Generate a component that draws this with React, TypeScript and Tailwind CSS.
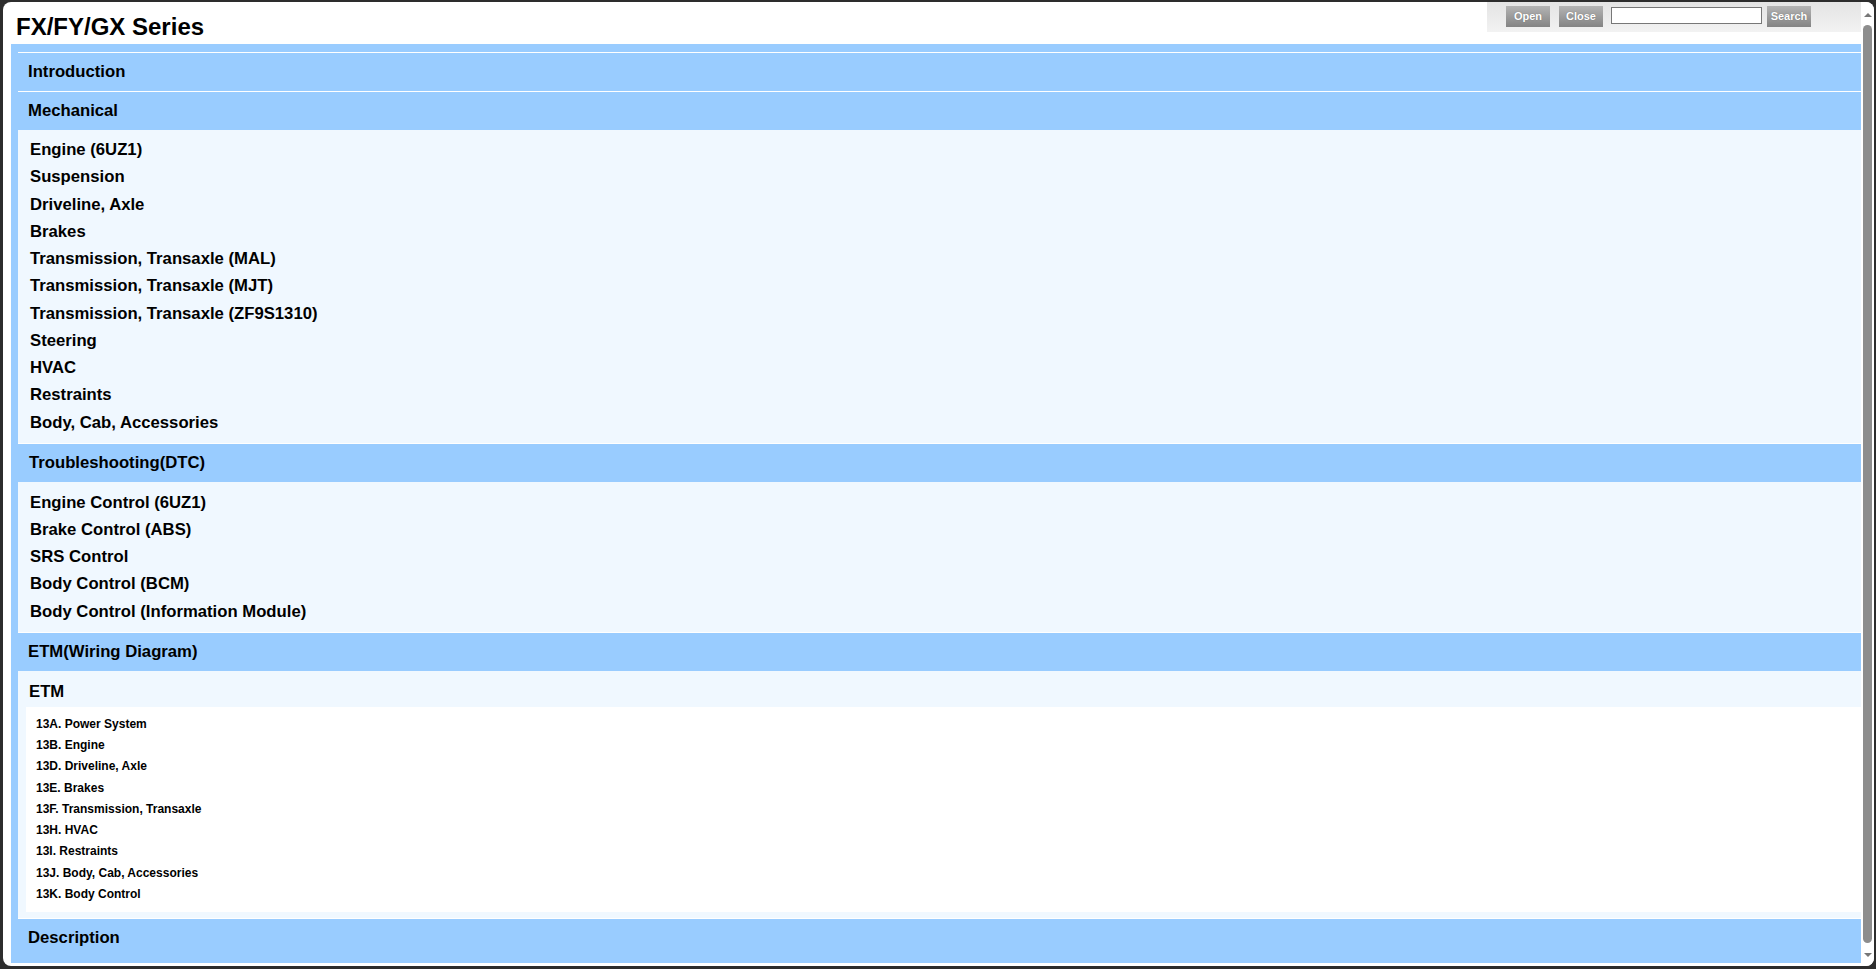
import React from "react";

// --- Table of contents data ----------------------------------------------------
const mechanical = [
  "Engine (6UZ1)",
  "Suspension",
  "Driveline, Axle",
  "Brakes",
  "Transmission, Transaxle (MAL)",
  "Transmission, Transaxle (MJT)",
  "Transmission, Transaxle (ZF9S1310)",
  "Steering",
  "HVAC",
  "Restraints",
  "Body, Cab, Accessories",
];

const troubleshooting = [
  "Engine Control (6UZ1)",
  "Brake Control (ABS)",
  "SRS Control",
  "Body Control (BCM)",
  "Body Control (Information Module)",
];

const etmChapters = [
  "13A. Power System",
  "13B. Engine",
  "13D. Driveline, Axle",
  "13E. Brakes",
  "13F. Transmission, Transaxle",
  "13H. HVAC",
  "13I. Restraints",
  "13J. Body, Cab, Accessories",
  "13K. Body Control",
];

function SectionHeader({ label, inset = "pl-[10px]" }: { label: string; inset?: string }) {
  return (
    <div
      className={`h-[39px] border-t border-white bg-[#99ccff] ${inset} text-[16.7px] font-bold leading-[38px] text-black`}
    >
      {label}
    </div>
  );
}

function ToolButton({ label, className = "" }: { label: string; className?: string }) {
  return (
    <button
      className={`h-[21px] w-[44px] shrink-0 bg-gradient-to-b from-[#b4b4b4] to-[#848484] text-[11px] font-bold leading-[21px] text-white [text-shadow:0_0_1px_#666] ${className}`}
      type="button"
    >
      {label}
    </button>
  );
}

export default function App() {
  return (
    <div className="h-[969px] w-full bg-[#2d2d2d] pt-[2px] pr-[2px] pb-[3px] pl-[3px] font-['Liberation_Sans',Arial,sans-serif]">
      <div className="flex h-full overflow-hidden rounded-[8px] bg-white">
        {/* --- Main column ---------------------------------------------------- */}
        <div className="flex min-w-0 flex-1 flex-col">
          <div className="flex h-[42px] items-start justify-between">
            <h1 className="pl-[13px] pt-[11px] text-[24px] font-bold leading-[28px] text-black">
              FX/FY/GX Series
            </h1>
            <div className="flex h-[30px] w-[374px] items-start bg-gradient-to-b from-[#e4e4e4] to-[#f2f2f2] pl-[19px] pt-[4px]">
              <ToolButton label="Open" />
              <ToolButton className="ml-[9px]" label="Close" />
              <input
                aria-label="Search text"
                className="ml-[8px] mt-[1px] h-[17px] w-[151px] border border-[#777] bg-white"
                type="text"
              />
              <ToolButton className="ml-[5px]" label="Search" />
            </div>
          </div>

          <div className="ml-[8px] flex-1 bg-[#99ccff] pl-[7px] pt-[8px]">
            <SectionHeader label="Introduction" />
            <SectionHeader label="Mechanical" />
            <ul className="bg-[#f0f8ff] pb-[7.25px] pl-[12px] pt-[6px]">
              {mechanical.map((item) => (
                <li className="h-[27.25px] text-[16.7px] font-bold leading-[27.25px] text-black" key={item}>
                  {item}
                </li>
              ))}
            </ul>

            <SectionHeader inset="pl-[11px]" label="Troubleshooting(DTC)" />
            <ul className="bg-[#f0f8ff] pb-[7.25px] pl-[12px] pt-[6.5px]">
              {troubleshooting.map((item) => (
                <li className="h-[27.25px] text-[16.7px] font-bold leading-[27.25px] text-black" key={item}>
                  {item}
                </li>
              ))}
            </ul>

            <SectionHeader label="ETM(Wiring Diagram)" />
            <div className="bg-[#f0f8ff] pb-[6px] pt-[6.5px]">
              <div className="h-[27.25px] pl-[11px] text-[16.7px] font-bold leading-[27.25px] text-black">
                ETM
              </div>
              <ul className="ml-[8px] mt-[2px] bg-white pb-[6.5px] pl-[10px] pt-[7px]">
                {etmChapters.map((item) => (
                  <li className="h-[21.25px] text-[12px] font-bold leading-[21.25px] text-black" key={item}>
                    {item}
                  </li>
                ))}
              </ul>
            </div>

            <SectionHeader label="Description" />
          </div>
          <div className="h-[3px] shrink-0" />
        </div>

        {/* --- Scrollbar ------------------------------------------------------ */}
        <div className="flex w-[13px] shrink-0 flex-col items-center bg-white">
          <svg className="mt-[11px] h-[4px] w-[8px]" viewBox="0 0 8 4" aria-hidden="true">
            <path d="M0 4 L4 0 L8 4 Z" fill="#777" />
          </svg>
          <div className="mt-[8px] h-[918px] w-[9px] rounded-full bg-[#8d8d8d]" />
          <svg className="mt-[10px] h-[4px] w-[8px]" viewBox="0 0 8 4" aria-hidden="true">
            <path d="M0 0 L8 0 L4 4 Z" fill="#777" />
          </svg>
        </div>
      </div>
    </div>
  );
}
